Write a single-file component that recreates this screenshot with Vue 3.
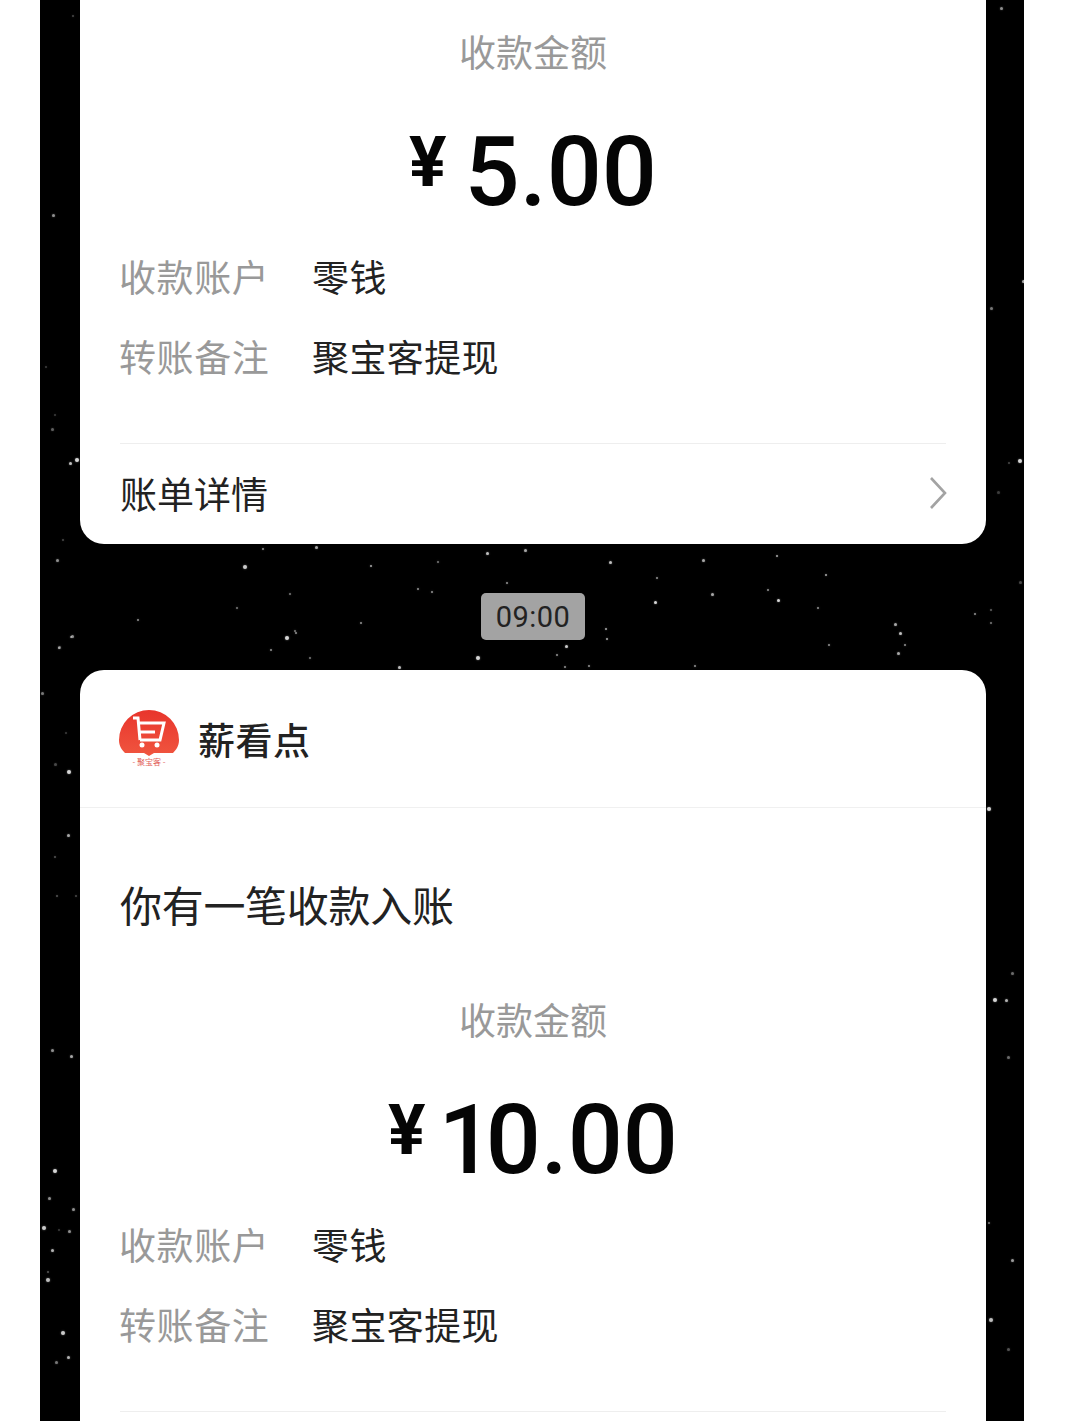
<script setup>
const details = [
  { label: '收款账户', value: '零钱' },
  { label: '转账备注', value: '聚宝客提现' },
]

// specks of the starfield wallpaper: x, y, size, opacity
const stars = [
  [243, 565, 4, 0.85], [262, 548, 2, 0.6], [315, 546, 3, 0.7], [370, 565, 2, 0.7], [295, 632, 2, 0.6],
  [437, 561, 2, 0.5], [486, 552, 3, 0.8], [524, 549, 3, 0.7], [609, 561, 3, 0.8], [702, 559, 3, 0.7],
  [776, 555, 2, 0.7], [825, 574, 2, 0.7], [656, 577, 2, 0.6], [506, 582, 2, 0.6], [711, 593, 3, 0.7],
  [777, 599, 3, 0.9], [654, 601, 3, 0.9], [767, 589, 2, 0.6], [417, 588, 2, 0.6], [431, 591, 2, 0.6],
  [289, 593, 2, 0.5], [236, 607, 2, 0.5], [137, 619, 2, 0.6], [360, 622, 2, 0.6], [70, 636, 2, 0.6],
  [285, 636, 4, 0.9], [294, 630, 2, 0.5], [270, 649, 2, 0.6], [58, 647, 2, 0.5], [476, 656, 4, 0.9],
  [565, 645, 3, 0.85], [556, 654, 2, 0.6], [605, 628, 2, 0.7], [606, 638, 2, 0.7], [817, 607, 2, 0.6],
  [974, 613, 2, 0.6], [990, 622, 2, 0.5], [894, 623, 3, 0.7], [899, 632, 3, 0.8], [904, 644, 2, 0.6],
  [897, 652, 3, 0.7], [828, 644, 2, 0.6], [398, 666, 3, 0.8], [564, 666, 2, 0.6], [588, 665, 2, 0.6],
  [694, 665, 2, 0.6], [309, 657, 2, 0.5],
  // left edge
  [72, 15, 2, 0.3], [52, 214, 3, 0.6], [45, 366, 2, 0.25], [54, 414, 2, 0.25], [51, 428, 3, 0.4],
  [75, 458, 4, 0.9], [69, 462, 3, 0.8], [62, 539, 2, 0.3], [56, 559, 3, 0.6], [71, 635, 3, 0.6],
  [58, 646, 3, 0.5], [41, 692, 3, 0.5], [65, 732, 2, 0.25], [54, 763, 3, 0.3], [67, 770, 4, 0.9],
  [67, 834, 3, 0.7], [54, 856, 2, 0.35], [56, 895, 2, 0.35], [75, 895, 2, 0.3], [51, 1049, 3, 0.6],
  [70, 1055, 3, 0.7], [53, 1169, 4, 0.9], [48, 1197, 3, 0.6], [72, 1208, 3, 0.6], [42, 1226, 4, 0.85],
  [68, 1230, 3, 0.6], [58, 1229, 2, 0.25], [51, 1249, 3, 0.75], [47, 1271, 2, 0.35], [46, 1278, 4, 0.8],
  [61, 1331, 4, 0.85], [67, 1356, 3, 0.75], [55, 1361, 3, 0.5],
  // right edge
  [1000, 7, 3, 0.6], [1022, 280, 3, 0.7], [990, 307, 3, 0.5], [1018, 459, 4, 0.9], [1008, 462, 2, 0.3],
  [997, 491, 3, 0.25], [1019, 581, 3, 0.3], [990, 609, 2, 0.4], [987, 807, 4, 0.9], [1011, 972, 3, 0.45],
  [993, 998, 4, 0.9], [1005, 999, 3, 0.75], [1007, 1056, 3, 0.45], [988, 1222, 2, 0.5], [1011, 1259, 3, 0.65],
  [989, 1318, 4, 0.8], [1007, 1348, 3, 0.35],
].map(([x, y, s, o]) => ({ left: x + 'px', top: y + 'px', width: s + 'px', height: s + 'px', opacity: o }))
</script>

<template>
  <div class="page">
    <div class="phone">
      <i v-for="(s, i) in stars" :key="i" class="star" :style="s"></i>

      <section class="card first">
        <div class="body">
          <div class="amount-label">收款金额</div>
          <div class="amount"><span class="yen">¥</span>5.00</div>
          <div v-for="d in details" :key="d.label" class="row">
            <span class="row-label">{{ d.label }}</span>
            <span class="row-value">{{ d.value }}</span>
          </div>
        </div>
        <div class="footer">
          <span>账单详情</span>
          <svg class="chevron" width="18" height="34" viewBox="0 0 18 34" fill="none">
            <path d="M2 2l14 15L2 32" stroke="#a3a3a3" stroke-width="2.6" />
          </svg>
        </div>
      </section>

      <div class="time-wrap"><span class="time">09:00</span></div>

      <section class="card">
        <header class="head">
          <div class="logo">
            <svg width="62" height="46" viewBox="0 0 62 46">
              <defs>
                <linearGradient id="logoFill" x1="0" y1="0" x2="0" y2="1">
                  <stop offset="0" stop-color="#e8352c" />
                  <stop offset="1" stop-color="#f0553f" />
                </linearGradient>
              </defs>
              <path d="M1 30A30 30 0 0 1 61 30C61 36 58 40 55 43H36l-5 3-5-3H7C4 40 1 36 1 30z" fill="url(#logoFill)" />
              <path d="M15 8h5l2 22M21 13h25l-4 17H22M22 22h15" fill="none" stroke="#fff" stroke-width="3" />
              <circle cx="24" cy="35" r="2.500" fill="#fff" />
              <circle cx="39" cy="35" r="2.500" fill="#fff" />
            </svg>
            <span class="logo-text">- 聚宝客 -</span>
          </div>
          <span class="name">薪看点</span>
        </header>
        <div class="title">你有一笔收款入账</div>
        <div class="body">
          <div class="amount-label">收款金额</div>
          <div class="amount"><span class="yen tight">¥</span><span class="one">1</span>0.00</div>
          <div v-for="d in details" :key="d.label" class="row">
            <span class="row-label">{{ d.label }}</span>
            <span class="row-value">{{ d.value }}</span>
          </div>
        </div>
        <div class="footer"></div>
      </section>
    </div>
  </div>
</template>

<style>
html, body { background: #fff; }
</style>

<style scoped>
.page {
  height: 1421px;
  overflow: hidden;
  background: #fff;
  font-family: "Noto Sans CJK SC", "Noto Sans", sans-serif;
}
.phone {
  position: relative;
  width: 984px;
  height: 1421px;
  margin-left: 40px;
  padding: 0 38px 0 40px;
  box-sizing: border-box;
  overflow: hidden;
  background: #000;
}
.star {
  position: absolute;
  margin-left: -40px;
  border-radius: 50%;
  background: #eee;
  box-shadow: 0 0 2px #888;
}
.card {
  position: relative;
  background: #fff;
  border-radius: 24px;
}
.card.first {
  border-radius: 0 0 24px 24px;
}
.body {
  padding: 24px 40px 0;
  height: 443px;
  box-sizing: border-box;
}
.amount-label {
  height: 54px;
  line-height: 54px;
  font-size: 37px;
  text-align: center;
  color: #999;
}
.amount {
  display: flex;
  justify-content: center;
  height: 116px;
  margin: 36px 0 6px;
  line-height: 116px;
  font-family: Roboto, "Liberation Sans", sans-serif;
  font-size: 97px;
  font-weight: 500;
  color: #050505;
}
.yen {
  margin: -10px 18px 0 0;
  font-size: 70px;
  font-weight: 700;
}
.yen.tight { margin-right: 13px; }
.one { letter-spacing: -8px; }
.row {
  display: flex;
  height: 80px;
  align-items: center;
  margin-left: -1px;
  font-size: 37px;
}
.row-label {
  width: 193px;
  letter-spacing: 0.6px;
  color: #999;
}
.row-value {
  letter-spacing: 0.4px;
  color: #222;
}
.footer {
  display: flex;
  align-items: center;
  justify-content: space-between;
  height: 101px;
  margin: 0 40px;
  padding-bottom: 3px;
  box-sizing: border-box;
  border-top: 1px solid #eee;
  font-size: 37px;
  color: #222;
}
.chevron { margin-right: -1px; }
.time-wrap {
  display: flex;
  justify-content: center;
  padding: 49px 0 30px;
}
.time {
  width: 104px;
  height: 47px;
  border-radius: 5px;
  background: #a3a3a3;
  font-family: Roboto, "Liberation Sans", sans-serif;
  font-size: 29px;
  line-height: 49px;
  letter-spacing: 0.5px;
  text-align: center;
  color: #222;
}
.head {
  display: flex;
  align-items: center;
  height: 138px;
  padding: 0 38px;
  box-sizing: border-box;
  border-bottom: 1px solid #f0f0f0;
}
.logo {
  display: flex;
  flex-direction: column;
  align-items: center;
  width: 62px;
}
.logo svg { display: block; }
.logo-text {
  margin-top: 1px;
  font-size: 8px;
  line-height: 10px;
  white-space: nowrap;
  color: #e2625a;
}
.name {
  margin-left: 18px;
  font-size: 37px;
  font-weight: 500;
  letter-spacing: 0.5px;
  color: #222;
}
.title {
  height: 62px;
  margin: 65px 0 33px;
  padding-left: 40px;
  line-height: 62px;
  font-size: 42px;
  letter-spacing: -0.3px;
  color: #222;
}
</style>
